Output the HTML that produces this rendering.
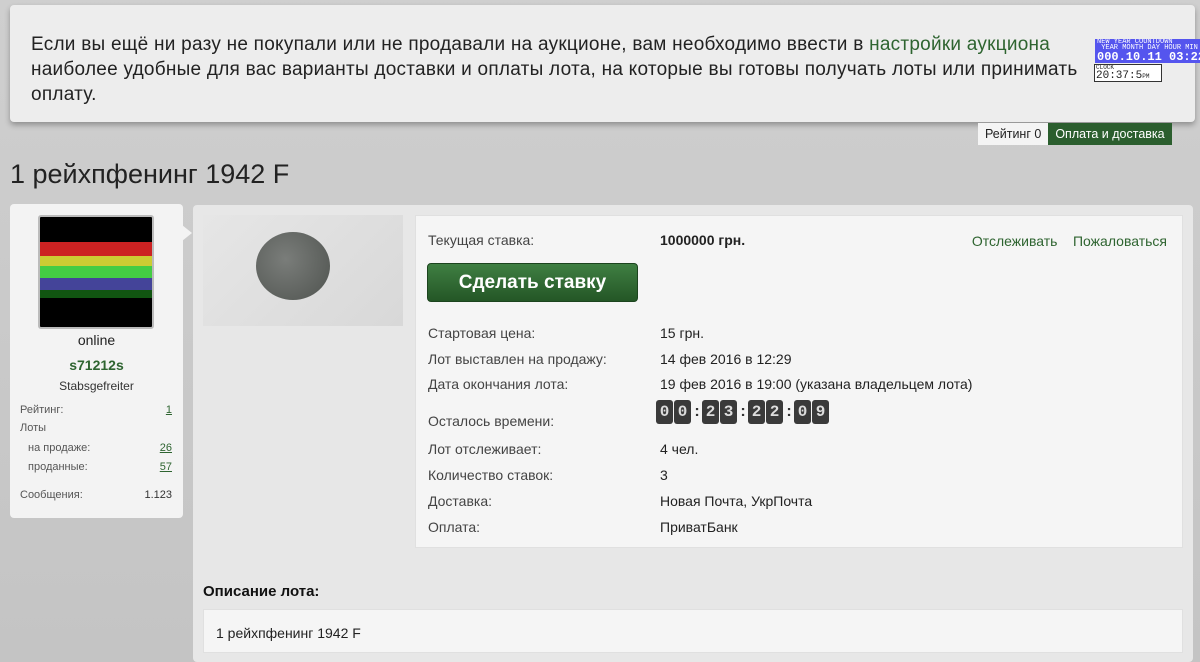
<!DOCTYPE html>
<html><head><meta charset="utf-8"><style>
*{box-sizing:border-box;margin:0;padding:0}
body{width:1200px;height:662px;overflow:hidden;background:linear-gradient(#cfcfcf,#c4c4c4);font-family:"Liberation Sans","DejaVu Sans",sans-serif;color:#222;position:relative}
.abs{position:absolute}
.notice{left:10px;top:5px;width:1185px;height:117px;background:#ededed;border-radius:4px;box-shadow:0 3px 6px rgba(0,0,0,.3);font-size:19px;line-height:25px;padding:27px 0 0 21px;color:#222;letter-spacing:0.25px;white-space:nowrap}
.notice a{color:#2e6430;text-decoration:none}
.tabs{top:123px;left:978px;height:22px;font-size:12.5px;display:flex}
.tabs div{padding:4px 7px;}
h1{position:absolute;left:10px;top:159px;font-size:27px;font-weight:normal;color:#222}
.side{left:10px;top:204px;width:173px;height:314px;background:#f3f3f3;border-radius:4px;font-size:11px;color:#555}
.main{left:193px;top:205px;width:1000px;height:457px;background:#e7e7e7;border-radius:4px}
.panel{left:415px;top:215px;width:768px;height:333px;background:#f5f5f5;border:1px solid #e0e0e0}
.row{position:absolute;left:12px;font-size:14px;color:#444}
.val{position:absolute;left:244px;font-size:14px;color:#222}
.dig{display:inline-block;width:17px;height:24px;background:#3a3a3a;color:#ddd;border-radius:3px;font:bold 16px "Liberation Mono",monospace;text-align:center;line-height:24px;margin-right:1px}
.sep{display:inline-block;width:10px;text-align:center;font-weight:bold;color:#333}
</style></head><body>
<div class="abs notice">Если вы ещё ни разу не покупали или не продавали на аукционе, вам необходимо ввести в <a>настройки аукциона</a><br>наиболее удобные для вас варианты доставки и оплаты лота, на которые вы готовы получать лоты или принимать<br>оплату.</div>
<div class="abs" style="left:1095px;top:39px;width:105px;height:24px;background:#5555ee;color:#fff;font-family:'Liberation Mono',monospace;padding-left:2px;overflow:hidden;white-space:nowrap">
<div style="font-size:7px;line-height:6px">NEW YEAR COUNTDOWN</div><div style="font-size:7px;line-height:6px">&nbsp;YEAR MONTH DAY HOUR MIN</div><div style="font-size:12px;line-height:12px;font-weight:bold">000.10.11 03:22</div></div>
<div class="abs" style="left:1094px;top:64px;width:68px;height:18px;background:#fff;border:1px solid #333;font-family:'Liberation Mono',monospace;padding-left:1px;white-space:nowrap;overflow:hidden"><div style="font-size:6px;line-height:6px">CLOCK</div><div style="font-size:11px;line-height:10px">20:37:5<span style="font-size:6px">PM</span></div></div>
<div class="abs tabs"><div style="background:#f4f4f4;color:#222">Рейтинг 0</div><div style="background:#2b5e2e;color:#fff">Оплата и доставка</div></div>
<h1>1 рейхпфенинг 1942 F</h1>
<div class="abs side">
 <div class="abs" style="left:28px;top:11px;width:116px;height:114px;border:2px solid #bbb;border-radius:3px;background:#000;overflow:hidden">
  <div class="abs" style="left:0;top:25px;width:112px;height:14px;background:#c22"></div>
  <div class="abs" style="left:0;top:39px;width:112px;height:10px;background:#cc3"></div>
  <div class="abs" style="left:0;top:49px;width:112px;height:12px;background:#4c4"></div>
  <div class="abs" style="left:0;top:61px;width:112px;height:12px;background:#449"></div>
  <div class="abs" style="left:0;top:73px;width:112px;height:8px;background:#151"></div>
 </div>
 <div class="abs" style="left:0;top:128px;width:173px;text-align:center;font-size:14px;color:#222">online</div>
 <div class="abs" style="left:0;top:153px;width:173px;text-align:center;font-size:14px;font-weight:bold;color:#2e6430">s71212s</div>
 <div class="abs" style="left:0;top:175px;width:173px;text-align:center;font-size:12px;color:#333">Stabsgefreiter</div>
 <div class="abs" style="left:10px;top:200px">Рейтинг:</div><div class="abs" style="right:11px;top:200px;text-decoration:underline;color:#2e6430">1</div>
 <div class="abs" style="left:10px;top:218px">Лоты</div>
 <div class="abs" style="left:18px;top:238px">на продаже:</div><div class="abs" style="right:11px;top:238px;text-decoration:underline;color:#2e6430">26</div>
 <div class="abs" style="left:18px;top:257px">проданные:</div><div class="abs" style="right:11px;top:257px;text-decoration:underline;color:#2e6430">57</div>
 <div class="abs" style="left:10px;top:285px">Сообщения:</div><div class="abs" style="right:11px;top:285px;color:#333">1.123</div>
</div>
<div class="abs" style="left:182px;top:225px;width:0;height:0;border-top:8px solid transparent;border-bottom:8px solid transparent;border-left:10px solid #f3f3f3"></div>
<div class="abs main"></div>
<div class="abs" style="left:203px;top:215px;width:200px;height:111px;background:linear-gradient(135deg,#e6e6e6,#d8d8d8)">
 <div class="abs" style="left:53px;top:17px;width:74px;height:68px;border-radius:50%;background:radial-gradient(circle at 40% 40%,#7a7d7a,#4f534f)"></div>
</div>
<div class="abs panel">
 <div class="row" style="top:16px">Текущая ставка:</div><div class="val" style="top:16px;font-weight:bold">1000000 грн.</div>
 <div class="abs" style="right:15px;top:17px;font-size:14px;color:#2e6430">Отслеживать &nbsp;&nbsp; Пожаловаться</div>
 <div class="abs" style="left:11px;top:47px;width:211px;height:39px;background:linear-gradient(#3f7f42,#245626);border-radius:4px;border:1px solid #1c441e;color:#fff;font-weight:bold;font-size:19px;text-align:center;line-height:37px">Сделать ставку</div>
 <div class="row" style="top:109px">Стартовая цена:</div><div class="val" style="top:109px">15 грн.</div>
 <div class="row" style="top:135px">Лот выставлен на продажу:</div><div class="val" style="top:135px">14 фев 2016 в 12:29</div>
 <div class="row" style="top:160px">Дата окончания лота:</div><div class="val" style="top:160px">19 фев 2016 в 19:00 (указана владельцем лота)</div>
 <div class="row" style="top:197px">Осталось времени:</div>
 <div class="abs" style="left:240px;top:184px"><span class="dig">0</span><span class="dig">0</span><span class="sep">:</span><span class="dig">2</span><span class="dig">3</span><span class="sep">:</span><span class="dig">2</span><span class="dig">2</span><span class="sep">:</span><span class="dig">0</span><span class="dig">9</span></div>
 <div class="row" style="top:225px">Лот отслеживает:</div><div class="val" style="top:225px">4 чел.</div>
 <div class="row" style="top:251px">Количество ставок:</div><div class="val" style="top:251px">3</div>
 <div class="row" style="top:277px">Доставка:</div><div class="val" style="top:277px">Новая Почта, УкрПочта</div>
 <div class="row" style="top:303px">Оплата:</div><div class="val" style="top:303px">ПриватБанк</div>
</div>
<div class="abs" style="left:203px;top:583px;font-size:15px;font-weight:bold;color:#111">Описание лота:</div>
<div class="abs" style="left:203px;top:609px;width:980px;height:44px;background:#f5f5f5;border:1px solid #e0e0e0;font-size:14px;padding:15px 0 0 12px">1 рейхпфенинг 1942 F</div>
</body></html>
